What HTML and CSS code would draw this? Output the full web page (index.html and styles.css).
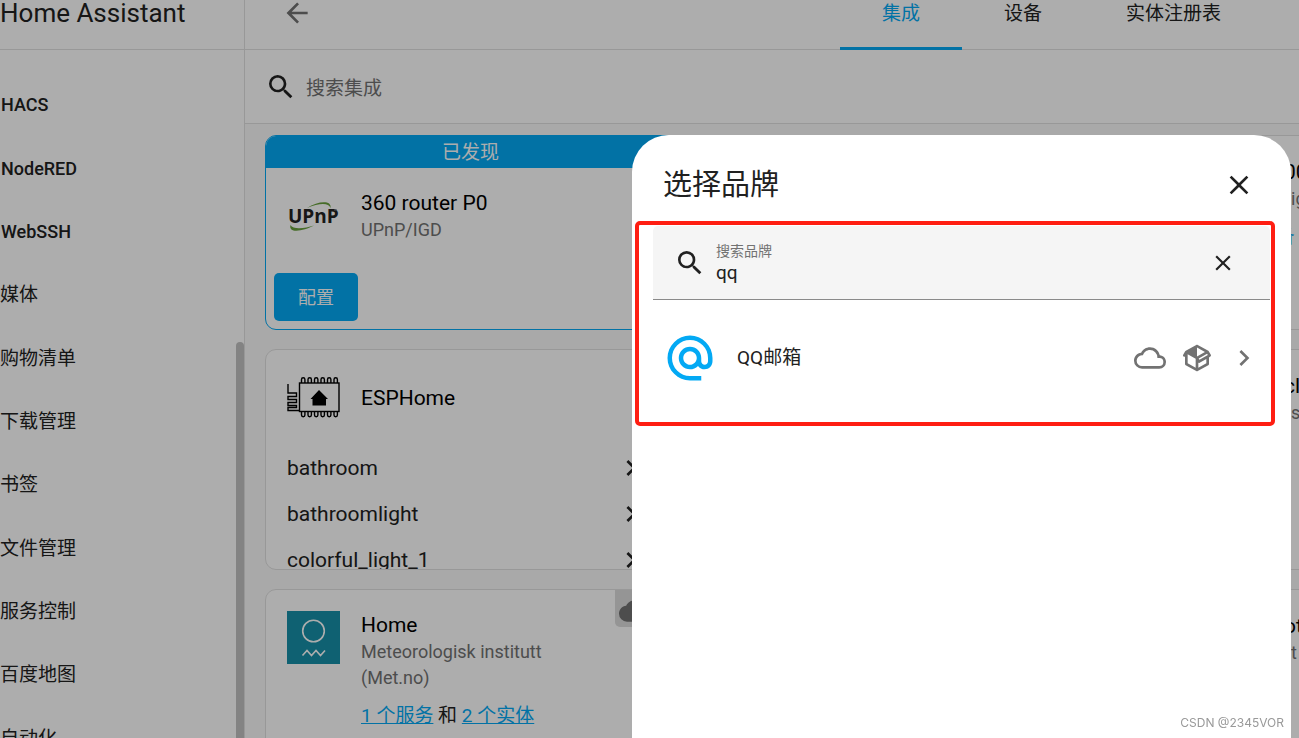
FILE: index.html
```html
<!DOCTYPE html>
<html lang="zh-CN">
<head>
<meta charset="utf-8">
<title>Home Assistant</title>
<link rel="stylesheet" href="styles.css">
</head>
<body>
<div class="app">
  <aside class="sidebar">
    <div class="sidebar-head">Home Assistant</div>
    <nav class="menu">
      <a class="latin" href="#">HACS</a>
      <a class="latin" href="#">NodeRED</a>
      <a class="latin" href="#">WebSSH</a>
      <a href="#">媒体</a>
      <a href="#">购物清单</a>
      <a href="#">下载管理</a>
      <a href="#">书签</a>
      <a href="#">文件管理</a>
      <a href="#">服务控制</a>
      <a href="#">百度地图</a>
      <a href="#">自动化</a>
    </nav>
    <div class="scroll-thumb"></div>
  </aside>

  <main class="main">
    <header class="topbar">
      <button class="icon-button back" aria-label="返回">
        <svg class="icon" viewBox="0 0 24 24"><path d="M20,11V13H8L13.5,18.5L12.08,19.92L4.16,12L12.08,4.08L13.5,5.5L8,11H20Z"/></svg>
      </button>
      <nav class="tabs">
        <a class="tab active" href="#">集成</a>
        <a class="tab" href="#">设备</a>
        <a class="tab" href="#">实体注册表</a>
      </nav>
    </header>
    <div class="searchbar">
      <svg class="icon" viewBox="0 0 24 24"><path d="M9.5,3A6.5,6.5 0 0,1 16,9.5C16,11.11 15.41,12.59 14.44,13.73L14.71,14H15.5L20.5,19L19,20.5L14,15.5V14.71L13.73,14.44C12.59,15.41 11.11,16 9.5,16A6.5,6.5 0 0,1 3,9.5A6.5,6.5 0 0,1 9.5,3M9.5,5C7,5 5,7 5,9.5C5,12 7,14 9.5,14C12,14 14,12 14,9.5C14,7 12,5 9.5,5Z"/></svg>
      <input type="text" placeholder="搜索集成" aria-label="搜索集成">
    </div>

    <div class="cards">
      <section class="card discovered">
        <div class="banner">已发现</div>
        <div class="card-head">
          <svg class="logo" viewBox="0 0 53 53" role="img" aria-label="UPnP">
            <path d="M20 18C31 11 45 10 43.500 18C42 12.500 32 13 20 18Z" fill="#68a03c"/>
            <path d="M3.500 35C1 44 17 41 27 35.500C18 38.500 6 40 3.500 35Z" fill="#68a03c"/>
            <text class="upnp" x="1" y="33">UPnP</text>
            <path d="M47 20H50" stroke="#777" stroke-width="1"/>
          </svg>
          <div>
            <div class="title">360 router P0</div>
            <div class="sub">UPnP/IGD</div>
          </div>
        </div>
        <button class="primary">配置</button>
      </section>

      <section class="card third">
        <div class="title">00</div>
        <div class="sub">ig</div>
        <a class="link" href="#">1 个设备</a>
      </section>

      <section class="card entries">
        <div class="card-head">
          <svg class="logo" viewBox="0 0 53 53" role="img" aria-label="ESPHome">
            <g fill="none" stroke="#000" stroke-width="1.400">
              <rect x="12.500" y="12" width="39.500" height="28.500"/>
              <path d="M14.500 12V8.500a1.700 1.700 0 0 1 3.400 0V12M21 12V8.500a1.700 1.700 0 0 1 3.400 0V12M27.500 12V8.500a1.700 1.700 0 0 1 3.400 0V12M34 12V8.500a1.700 1.700 0 0 1 3.400 0V12M40.500 12V8.500a1.700 1.700 0 0 1 3.400 0V12M47 12V8.500a1.700 1.700 0 0 1 3.400 0V12"/>
              <path d="M14.500 40.500V44a1.700 1.700 0 0 0 3.400 0V40.500M21 40.500V44a1.700 1.700 0 0 0 3.400 0V40.500M27.500 40.500V44a1.700 1.700 0 0 0 3.400 0V40.500M34 40.500V44a1.700 1.700 0 0 0 3.400 0V40.500M40.500 40.500V44a1.700 1.700 0 0 0 3.400 0V40.500M47 40.500V44a1.700 1.700 0 0 0 3.400 0V40.500"/>
              <path d="M1 13V22H9.500V25.500H1V28.500H9.500V31.500H1V34.500H9.500V36.500H1V39.500H12.500"/>
            </g>
            <path d="M32 19L41 28H39V34.500H25.500V28H23.500Z" fill="#000"/>
          </svg>
          <div class="title">ESPHome</div>
        </div>
        <ul class="entry-list">
          <li><a href="#"><span>bathroom</span><svg class="icon" viewBox="0 0 24 24"><path d="M8.590,16.580L13.170,12L8.590,7.410L10,6L16,12L10,18L8.590,16.580Z"/></svg></a></li>
          <li><a href="#"><span>bathroomlight</span><svg class="icon" viewBox="0 0 24 24"><path d="M8.590,16.580L13.170,12L8.590,7.410L10,6L16,12L10,18L8.590,16.580Z"/></svg></a></li>
          <li><a href="#"><span>colorful_light_1</span><svg class="icon" viewBox="0 0 24 24"><path d="M8.590,16.580L13.170,12L8.590,7.410L10,6L16,12L10,18L8.590,16.580Z"/></svg></a></li>
        </ul>
      </section>

      <section class="card third">
        <div class="title">cl</div>
        <div class="sub">ss</div>
      </section>

      <section class="card tall">
        <div class="cloud-badge">
          <svg class="icon" viewBox="0 0 24 24"><path d="M19.350,10.030C18.670,6.590 15.640,4 12,4C9.110,4 6.600,5.640 5.350,8.030C2.340,8.360 0,10.900 0,14A6,6 0 0,0 6,20H19A5,5 0 0,0 24,15C24,12.360 21.950,10.220 19.350,10.030Z"/></svg>
        </div>
        <div class="card-head top">
          <svg class="logo" viewBox="0 0 53 53" role="img" aria-label="Met.no">
            <rect width="53" height="53" fill="#1790a8"/>
            <g fill="none" stroke="#fff" stroke-width="1.600">
              <circle cx="26.500" cy="20" r="10.800"/>
              <path d="M15.500 44.500L20 39.500L24.500 44.500L29 39.500L33.500 44.500L38 39.500"/>
            </g>
          </svg>
          <div>
            <div class="title">Home</div>
            <div class="sub">Meteorologisk institutt<br>(Met.no)</div>
            <div class="links"><a href="#">1 个服务</a> 和 <a href="#">2 个实体</a></div>
          </div>
        </div>
      </section>

      <section class="card third">
        <div class="title">ot</div>
        <div class="sub">t</div>
      </section>
    </div>
  </main>
</div>

<div class="scrim"></div>

<div class="dialog" role="dialog" aria-labelledby="dialog-title">
  <div class="dialog-head">
    <h2 id="dialog-title">选择品牌</h2>
    <button class="icon-button" aria-label="关闭">
      <svg class="icon" viewBox="0 0 24 24"><path d="M19,6.410L17.590,5L12,10.590L6.410,5L5,6.410L10.590,12L5,17.590L6.410,19L12,13.410L17.590,19L19,17.590L13.410,12L19,6.410Z"/></svg>
    </button>
  </div>
  <div class="highlight">
    <div class="brand-search">
      <svg class="icon" viewBox="0 0 24 24"><path d="M9.500,3A6.500,6.500 0 0,1 16,9.500C16,11.110 15.410,12.590 14.440,13.730L14.710,14H15.500L20.500,19L19,20.500L14,15.500V14.710L13.730,14.440C12.590,15.410 11.110,16 9.500,16A6.500,6.500 0 0,1 3,9.500A6.500,6.500 0 0,1 9.500,3M9.500,5C7,5 5,7 5,9.500C5,12 7,14 9.500,14C12,14 14,12 14,9.500C14,7 12,5 9.500,5Z"/></svg>
      <div class="field">
        <label for="brand">搜索品牌</label>
        <input id="brand" type="text" value="qq">
      </div>
      <button class="icon-button" aria-label="清除">
        <svg class="icon small" viewBox="0 0 24 24"><path d="M19,6.410L17.590,5L12,10.590L6.410,5L5,6.410L10.590,12L5,17.590L6.410,19L12,13.410L17.590,19L19,17.590L13.410,12L19,6.410Z"/></svg>
      </button>
    </div>
    <a class="brand" href="#">
      <svg class="brand-logo" viewBox="0 0 24 24"><path d="M12,15C12.810,15 13.500,14.700 14.110,14.110C14.700,13.500 15,12.810 15,12C15,11.190 14.700,10.500 14.110,9.890C13.500,9.300 12.810,9 12,9C11.190,9 10.500,9.300 9.890,9.890C9.300,10.500 9,11.190 9,12C9,12.810 9.300,13.500 9.890,14.110C10.500,14.700 11.190,15 12,15M12,2C14.750,2 17.100,3 19.050,4.950C21,6.900 22,9.250 22,12V13.450C22,14.450 21.650,15.300 21,16C20.300,16.670 19.500,17 18.500,17C17.300,17 16.310,16.500 15.560,15.500C14.560,16.500 13.380,17 12,17C10.630,17 9.450,16.500 8.460,15.540C7.500,14.550 7,13.380 7,12C7,10.630 7.500,9.450 8.460,8.460C9.450,7.500 10.630,7 12,7C13.370,7 14.550,7.500 15.540,8.460C16.500,9.450 17,10.630 17,12V13.450C17,13.860 17.160,14.220 17.460,14.530C17.760,14.840 18.110,15 18.500,15C18.920,15 19.270,14.840 19.570,14.530C19.870,14.220 20,13.860 20,13.450V12C20,9.810 19.230,7.930 17.650,6.350C16.070,4.770 14.190,4 12,4C9.810,4 7.930,4.770 6.350,6.350C4.770,7.930 4,9.810 4,12C4,14.190 4.770,16.070 6.350,17.650C7.930,19.230 9.810,20 12,20H17V22H12C9.250,22 6.900,21 4.950,19.050C3,17.100 2,14.750 2,12C2,9.250 3,6.900 4.950,4.950C6.900,3 9.250,2 12,2Z"/></svg>
      <span class="brand-name">QQ邮箱</span>
      <span class="meta">
        <svg class="icon" viewBox="0 0 24 24"><path d="M19,18H6A4,4 0 0,1 2,14A4,4 0 0,1 6,10H6.710C7.370,7.690 9.500,6 12,6A5.500,5.500 0 0,1 17.500,11.500V12H19A3,3 0 0,1 22,15A3,3 0 0,1 19,18M19.350,10.030C18.670,6.590 15.640,4 12,4C9.110,4 6.600,5.640 5.350,8.030C2.340,8.360 0,10.900 0,14A6,6 0 0,0 6,20H19A5,5 0 0,0 24,15C24,12.360 21.950,10.220 19.350,10.030Z"/></svg>
        <svg class="icon" viewBox="0 0 24 24"><path d="M2,10.960C1.500,10.680 1.350,10.070 1.630,9.590L3.130,7C3.240,6.800 3.410,6.660 3.600,6.580L11.430,2.180C11.590,2.060 11.790,2 12,2C12.210,2 12.410,2.060 12.570,2.180L20.470,6.620C20.660,6.720 20.820,6.880 20.910,7.080L22.360,9.600C22.640,10.080 22.470,10.690 22,10.960L21,11.540V16.500C21,16.880 20.790,17.210 20.470,17.380L12.570,21.820C12.410,21.940 12.210,22 12,22C11.790,22 11.590,21.940 11.430,21.820L3.530,17.380C3.210,17.210 3,16.880 3,16.500V10.960C2.700,11.130 2.320,11.140 2,10.960M12,4.150V10.850L17.960,7.500L12,4.150M5,15.910L11,19.290V12.580L5,9.210V15.910M19,15.910V12.690L14,15.590C13.670,15.770 13.300,15.760 13,15.600V19.290L19,15.910M13.850,13.360L20.130,9.730L19.550,8.720L13.270,12.350L13.850,13.360Z"/></svg>
        <svg class="icon" viewBox="0 0 24 24"><path d="M8.590,16.580L13.170,12L8.590,7.410L10,6L16,12L10,18L8.590,16.580Z"/></svg>
      </span>
    </a>
  </div>
  <div class="watermark">CSDN @2345VOR</div>
</div>
</body>
</html>
```

FILE: styles.css
```css
* { box-sizing: border-box; }

body {
  margin: 0;
  height: 100vh;
  overflow: hidden;
  background: #fafafa;
  color: #212121;
  font-family: Roboto, "Noto Sans CJK SC", sans-serif;
  font-size: 19px;
  font-weight: 400;
  line-height: 27px;
}

a { color: inherit; text-decoration: none; }

button, input {
  margin: 0;
  padding: 0;
  border: 0;
  background: none;
  color: inherit;
  font: inherit;
}

.icon { display: block; flex: none; width: 32px; height: 32px; fill: currentColor; }
.icon.small { width: 26px; height: 26px; }
.icon-button { display: flex; }

.app { display: flex; height: 100vh; }

/* Sidebar */
.sidebar {
  position: relative;
  display: flex;
  flex: none;
  flex-direction: column;
  width: 245px;
  border-right: 1px solid #e0e0e0;
  background: #fff;
}
.sidebar-head {
  height: 50px;
  border-bottom: 1px solid #e0e0e0;
  font-size: 26px;
}
.menu {
  display: flex;
  flex: 1;
  flex-direction: column;
  margin-bottom: -32px;
  padding: 23px 0 0;
}
.menu a { display: flex; flex: 1; align-items: center; }
.menu .latin { padding-left: 1px; font-size: 18px; font-weight: 500; }
.scroll-thumb {
  position: absolute;
  top: 342px;
  right: 0;
  bottom: 0;
  width: 8px;
  border-radius: 4px 4px 0 0;
  background: #c1c1c1;
}

/* Main column */
.main { flex: 1; min-width: 0; overflow: hidden; }
.topbar {
  display: flex;
  justify-content: space-between;
  height: 50px;
  padding: 0 36px;
  border-bottom: 1px solid #e0e0e0;
  background: #fff;
}
.back { align-self: flex-start; height: 26px; align-items: center; color: #727272; }
.tabs { display: flex; }
.tab { height: 50px; padding: 0 42px; }
.tab.active { border-bottom: 3px solid #03a9f4; color: #03a9f4; }

.searchbar {
  display: flex;
  align-items: center;
  gap: 9px;
  height: 74px;
  padding: 0 20px;
  border-bottom: 1px solid #e0e0e0;
  background: #fff;
}
.searchbar input { flex: 1; min-width: 0; padding-top: 3px; outline: 0; }
.searchbar input::placeholder { color: #727272; opacity: 1; }

/* The third column runs past the right edge of the window */
.cards {
  display: grid;
  grid-template-columns: repeat(3, 1fr);
  gap: 19px;
  margin-right: -237px;
  padding: 11px 0 0 20px;
}
.card {
  position: relative;
  grid-column: 1;
  overflow: hidden;
  border: 1px solid #e0e0e0;
  border-radius: 11px;
  background: #fff;
}
.card.tall { min-height: 190px; }
.card.third { grid-column: 3; padding: 22px 0 0 158px; white-space: nowrap; }
.third .sub { padding-left: 7px; }
.third .link { display: block; margin: 11px 0 0 -62px; color: #03a9f4; }

.card.discovered { border-color: #03a9f4; }
.banner {
  height: 32px;
  background: #03a9f4;
  color: #fff;
  line-height: 34px;
  text-align: center;
}
.card-head { display: flex; align-items: center; gap: 21px; padding: 21px 21px 0; }
.card-head.top { align-items: flex-start; }
.logo { flex: none; width: 53px; height: 53px; }
.upnp { fill: #222; font: 700 19px "Open Sans", sans-serif; }
.title { color: #000; font-size: 21px; line-height: 28px; }
.sub { color: #727272; font-size: 18px; line-height: 26px; }
.primary {
  display: block;
  height: 48px;
  margin: 30px 8px 8px;
  padding: 0 24px;
  border-radius: 5px;
  background: #03a9f4;
  color: #fff;
  font-size: 18px;
}

.entries { height: 221px; }
.entry-list { margin: 21px 0 0; padding: 0 28px 0 21px; list-style: none; font-size: 21px; }
.entry-list a { display: flex; align-items: center; justify-content: space-between; height: 46px; }

.cloud-badge {
  position: absolute;
  top: 0;
  right: 21px;
  padding: 5px 3px 0 4px;
  height: 37px;
  border-radius: 0 0 5px 5px;
  background: #dcdcdc;
  color: #727272;
}
.links { margin-top: 11px; }
.links a { color: #03a9f4; text-decoration: underline; }

/* Dialog */
.scrim { position: fixed; inset: 0; background: rgba(0, 0, 0, 0.32); }
.dialog {
  position: fixed;
  top: 135px;
  right: 8px;
  bottom: 0;
  display: flex;
  flex-direction: column;
  width: 659px;
  border-radius: 37px 37px 0 0;
  background: #fff;
}
.dialog-head {
  display: flex;
  align-items: center;
  justify-content: space-between;
  height: 86px;
  padding: 14px 36px 0 31px;
}
.dialog-head h2 { margin: 0; font-size: 29px; font-weight: 400; line-height: 40px; }
.highlight {
  margin: 0 16px 0 3px;
  padding: 1px 1px 22px 14px;
  border: 4px solid #ff1e12;
  border-radius: 5px;
}
.brand-search {
  display: flex;
  align-items: center;
  height: 74px;
  padding: 0 34px 0 21px;
  border-bottom: 1px solid #8a8a8a;
  border-radius: 5px 5px 0 0;
  background: #f5f5f5;
}
.field { display: flex; flex: 1; flex-direction: column; padding-left: 10px; }
.field label { color: #727272; font-size: 14px; line-height: 20px; }
.field input { width: 100%; line-height: 23px; outline: 0; }
.brand { display: flex; align-items: center; height: 85px; margin-top: 15px; padding: 0 10px; }
.brand-logo { width: 54px; height: 54px; fill: #03a9f4; }
.brand-name { flex: 1; padding-left: 20px; }
.meta { display: flex; gap: 15px; color: #727272; }
.watermark {
  margin: auto 7px 5px;
  color: #999;
  font: 12px/20px Inter, sans-serif;
  text-align: right;
}
```
